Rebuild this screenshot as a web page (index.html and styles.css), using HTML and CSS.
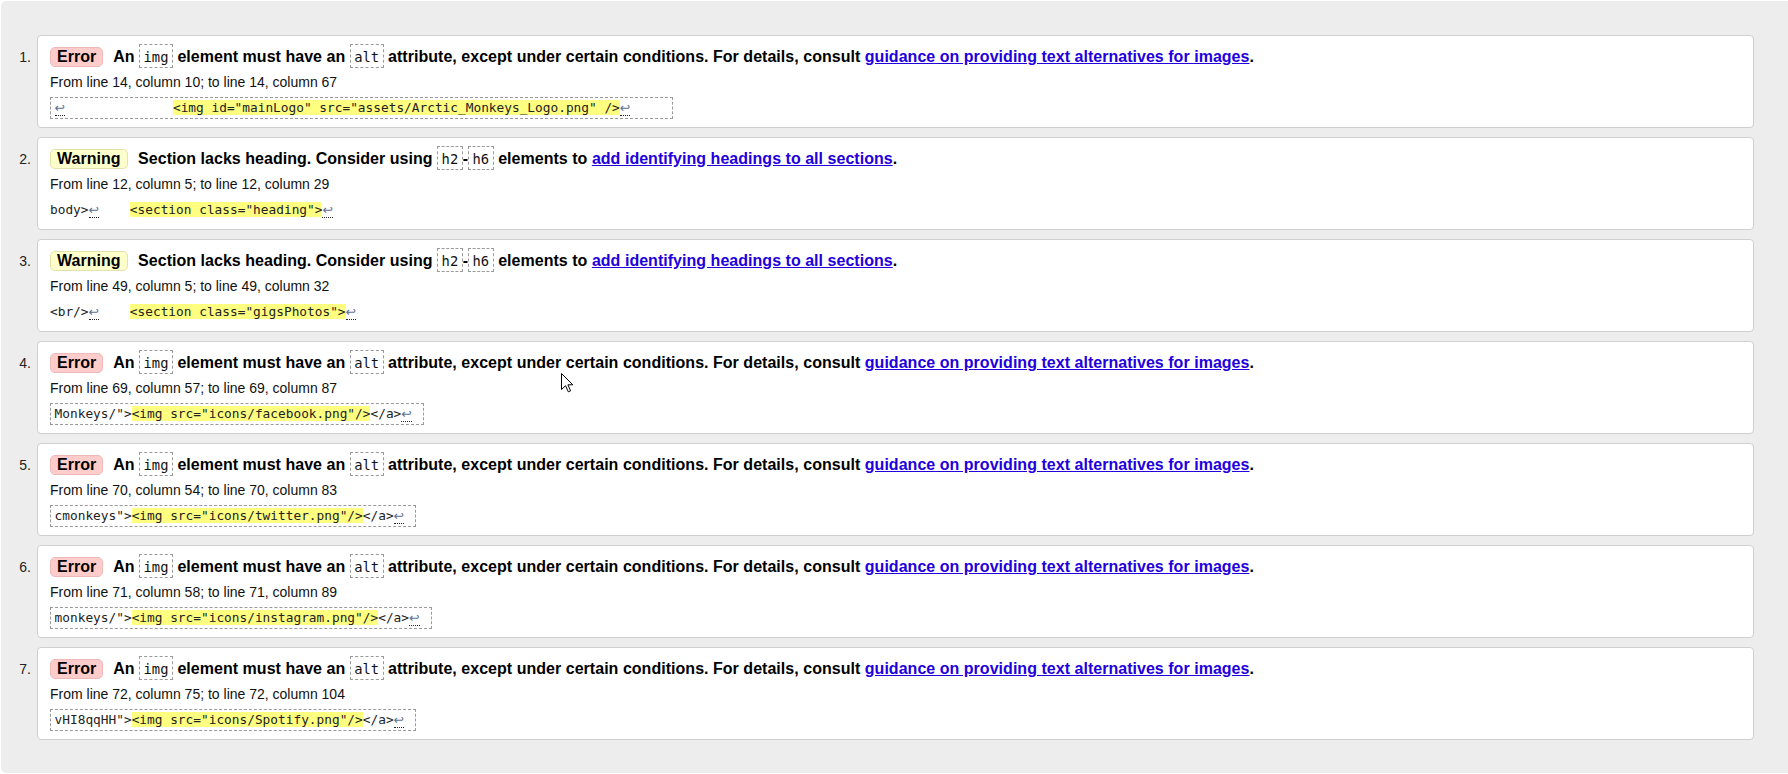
FILE: index.html
```html
<!DOCTYPE html>
<html lang="en">
<head>
<meta charset="utf-8">
<title>Validation results</title>
<link rel="stylesheet" href="styles.css">
</head>
<body>
<div class="page">
  <ol class="results">
    <li class="item">
      <span class="num">1.</span>
      <div class="card">
        <p class="title"><span class="badge error">Error</span> An <code>img</code> element must have an <code>alt</code> attribute, except under certain conditions. For details, consult <a href="#">guidance on providing text alternatives for images</a>.</p>
        <p class="loc">From line 14, column 10; to line 14, column 67</p>
        <p class="extract boxed"><span class="lf">↩</span>              <mark>&lt;img id="mainLogo" src="assets/Arctic_Monkeys_Logo.png" /&gt;</mark><span class="lf">↩</span>     </p>
      </div>
    </li>
    <li class="item">
      <span class="num">2.</span>
      <div class="card">
        <p class="title"><span class="badge warning">Warning</span> Section lacks heading. Consider using <code>h2</code>-<code>h6</code> elements to <a href="#">add identifying headings to all sections</a>.</p>
        <p class="loc">From line 12, column 5; to line 12, column 29</p>
        <p class="extract">body&gt;<span class="lf">↩</span>    <mark>&lt;section class="heading"&gt;</mark><span class="lf">↩</span></p>
      </div>
    </li>
    <li class="item">
      <span class="num">3.</span>
      <div class="card">
        <p class="title"><span class="badge warning">Warning</span> Section lacks heading. Consider using <code>h2</code>-<code>h6</code> elements to <a href="#">add identifying headings to all sections</a>.</p>
        <p class="loc">From line 49, column 5; to line 49, column 32</p>
        <p class="extract">&lt;br/&gt;<span class="lf">↩</span>    <mark>&lt;section class="gigsPhotos"&gt;</mark><span class="lf">↩</span></p>
      </div>
    </li>
    <li class="item">
      <span class="num">4.</span>
      <div class="card">
        <p class="title"><span class="badge error">Error</span> An <code>img</code> element must have an <code>alt</code> attribute, except under certain conditions. For details, consult <a href="#">guidance on providing text alternatives for images</a>.</p>
        <p class="loc">From line 69, column 57; to line 69, column 87</p>
        <p class="extract boxed">Monkeys/"&gt;<mark>&lt;img src="icons/facebook.png"/&gt;</mark>&lt;/a&gt;<span class="lf">↩</span> </p>
      </div>
    </li>
    <li class="item">
      <span class="num">5.</span>
      <div class="card">
        <p class="title"><span class="badge error">Error</span> An <code>img</code> element must have an <code>alt</code> attribute, except under certain conditions. For details, consult <a href="#">guidance on providing text alternatives for images</a>.</p>
        <p class="loc">From line 70, column 54; to line 70, column 83</p>
        <p class="extract boxed">cmonkeys"&gt;<mark>&lt;img src="icons/twitter.png"/&gt;</mark>&lt;/a&gt;<span class="lf">↩</span> </p>
      </div>
    </li>
    <li class="item">
      <span class="num">6.</span>
      <div class="card">
        <p class="title"><span class="badge error">Error</span> An <code>img</code> element must have an <code>alt</code> attribute, except under certain conditions. For details, consult <a href="#">guidance on providing text alternatives for images</a>.</p>
        <p class="loc">From line 71, column 58; to line 71, column 89</p>
        <p class="extract boxed">monkeys/"&gt;<mark>&lt;img src="icons/instagram.png"/&gt;</mark>&lt;/a&gt;<span class="lf">↩</span> </p>
      </div>
    </li>
    <li class="item">
      <span class="num">7.</span>
      <div class="card">
        <p class="title"><span class="badge error">Error</span> An <code>img</code> element must have an <code>alt</code> attribute, except under certain conditions. For details, consult <a href="#">guidance on providing text alternatives for images</a>.</p>
        <p class="loc">From line 72, column 75; to line 72, column 104</p>
        <p class="extract boxed">vHI8qqHH"&gt;<mark>&lt;img src="icons/Spotify.png"/&gt;</mark>&lt;/a&gt;<span class="lf">↩</span> </p>
      </div>
    </li>
  </ol>
</div>
<svg class="cursor" width="13" height="20" viewBox="0 0 13 20" aria-hidden="true">
  <polygon points="0.5,0.5 0.5,16.5 4.5,12.7 7.3,18.8 9.6,17.8 6.9,11.8 11.8,11.8" fill="#fff" stroke="#000" stroke-width="1" stroke-linejoin="miter"/>
</svg>
</body>
</html>
```

FILE: styles.css
```css
html, body {
  margin: 0;
  background: #fff;
}

body {
  padding: 1px 0 0 1px;
  font-family: "Liberation Sans", Arial, sans-serif;
  color: #000;
}

.page {
  background: #ededed;
  border-radius: 5px 0 0 5px;
  height: 772px;
  box-sizing: border-box;
  padding: 34px 34px 0 0;
}

.results {
  list-style: none;
  margin: 0;
  padding: 0;
}

.item {
  display: flex;
  align-items: baseline;
  margin-bottom: 9px;
}

.num {
  flex: 0 0 36px;
  box-sizing: border-box;
  padding-right: 6px;
  text-align: right;
  font-size: 14px;
  color: #222;
}

.card {
  flex: 1;
  background: #fff;
  border: 1px solid #cfcfcf;
  border-radius: 4px;
  padding: 8px 12px 8px 12px;
}

.card p {
  margin: 0;
}

.title {
  font-size: 16px;
  font-weight: bold;
  line-height: 24px;
  height: 24px;
  white-space: nowrap;
  letter-spacing: 0.03px;
}

.badge {
  display: inline-block;
  line-height: 18px;
  padding: 0 6px;
  margin-right: 6px;
  border: 1px solid;
  border-radius: 5px;
}

.badge.error {
  background: #ffcccc;
  border-color: #efb9b9;
}

.badge.warning {
  background: #ffffcc;
  border-color: #e2e2aa;
}

.title code {
  display: inline-block;
  font-family: "DejaVu Sans Mono", monospace;
  font-weight: normal;
  font-size: 13.8px;
  line-height: 20px;
  padding: 2px 3.5px 0;
  border: 1px dashed #9a9a9a;
  color: #111;
  letter-spacing: 0;
}

.title a {
  color: #2200dd;
  text-decoration: underline;
}

.loc {
  margin-top: 5px !important;
  font-size: 14px;
  line-height: 18px;
  color: #111;
}

.extract {
  margin-top: 6px !important;
  display: inline-block;
  font-family: "DejaVu Sans Mono", monospace;
  font-size: 12.8px;
  line-height: 22px;
  white-space: pre;
  color: #222;
}

.extract.boxed {
  line-height: 20px;
  padding: 0 3.6px;
  border: 1px dashed #9a9a9a;
}

.extract mark {
  background: #ffff80;
  color: inherit;
}

.lf {
  font-family: "DejaVu Sans", sans-serif;
  font-size: 12.5px;
  color: #5d6f8f;
  border-bottom: 1px dotted #222;
}

.cursor {
  position: absolute;
  left: 561px;
  top: 373px;
}
```
